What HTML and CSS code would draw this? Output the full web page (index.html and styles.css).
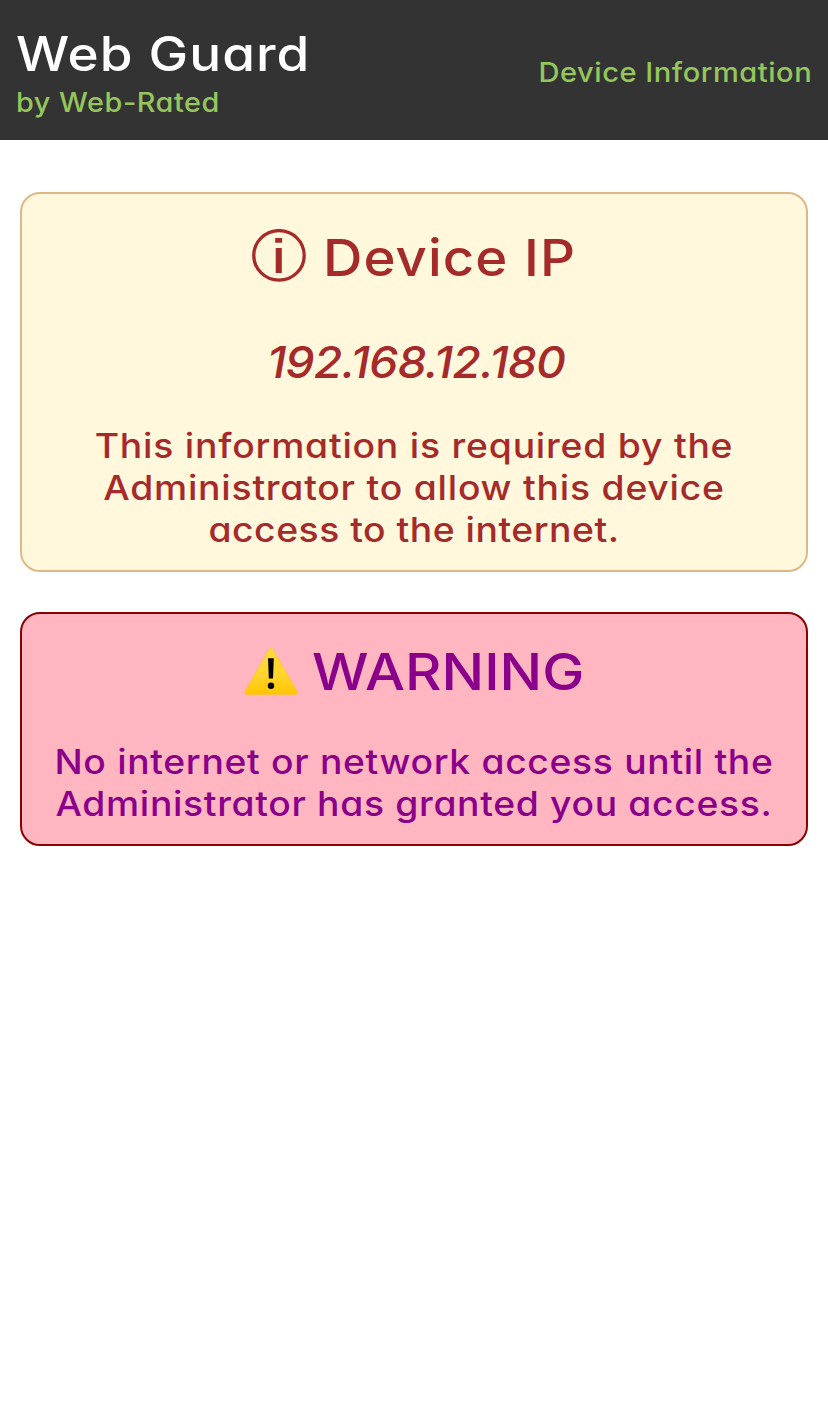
FILE: index.html
```html
<!DOCTYPE html>
<html lang="en">
<head>
<meta charset="utf-8">
<title>Web Guard</title>
<link rel="stylesheet" href="styles.css">
</head>
<body>
<header class="header">
  <div class="brand">
    <h1 class="brand-name">Web Guard</h1>
    <div class="brand-by">by Web-Rated</div>
  </div>
  <nav class="nav">Device Information</nav>
</header>
<main class="content">
  <section class="card card-info">
    <h2 class="title">
      <svg class="info-icon" viewBox="0 0 54 54"><ellipse cx="27" cy="26.4" rx="25.2" ry="24.8" fill="none" stroke="currentColor" stroke-width="3.3"/><path d="M23.2 9h6.9v4.7h-6.9zM23.7 19h6.1v25h-6.1z" fill="currentColor"/></svg>
      <span class="title-info">Device IP</span>
    </h2>
    <div class="address">192.168.12.180</div>
    <p class="text">This information is required by the<br>Administrator to allow this device<br><span class="last-line">access to the internet.</span></p>
  </section>
  <section class="card card-warning">
    <h2 class="title">
      <svg class="warning-icon" viewBox="0 0 54 48"><defs><linearGradient id="amber" x1="0" y1="0" x2="0" y2="1"><stop offset="0" stop-color="#ffda3b"/><stop offset=".6" stop-color="#ffd42c"/><stop offset="1" stop-color="#ffc400"/></linearGradient></defs><path d="M24.8 2.6Q27 -.6 29.2 2.6L53 44.2Q54.2 47.5 51 47.5H3Q-.2 47.5 1 44.2Z" fill="url(#amber)" stroke="#f5c21c" stroke-width=".5"/><path d="M24 11.2h5.8l-.8 20.3h-4.2z" fill="#000"/><circle cx="27" cy="38.8" r="3.2" fill="#000"/></svg>
      <span class="title-warning">WARNING</span>
    </h2>
    <p class="text">No internet or network access until the<br><span class="wide-words">Administrator has granted you access.</span></p>
  </section>
</main>
</body>
</html>
```
FILE: styles.css
```css
* { box-sizing: border-box; }
body {
  margin: 0;
  background: #fff;
  font-family: Inter, "Liberation Sans", sans-serif;
  font-feature-settings: "cv11" 1;
}
h1, h2, p { margin: 0; font-weight: 400; }
.header {
  height: 140px;
  padding: 24px 16px 0;
  display: flex;
  justify-content: space-between;
  background: #333;
}
.brand-name { font-size: 48px; line-height: 60px; font-weight: 500; color: #fff; letter-spacing: 0.9px; white-space: nowrap; transform: scaleX(1.105); transform-origin: left; }
.brand-by, .nav { font-size: 27px; font-weight: 500; color: #95c65c; white-space: nowrap; }
.brand-by { line-height: 37px; letter-spacing: 0.5px; transform: scaleX(1.067); transform-origin: left; }
.nav { padding-top: 30px; line-height: 37px; letter-spacing: 0.5px; transform: scaleX(1.077); transform-origin: right; }
.content { padding: 52px 20px 0; display: flex; flex-direction: column; gap: 40px; }
.card { border: 2px solid; border-radius: 20px; text-align: center; }
.card-info { height: 380px; padding-top: 32px; color: #a52a2a; background: #fff8dc; border-color: #deb887; }
.card-warning { height: 234px; padding-top: 26px; color: #8b008b; background: #ffb6c1; border-color: #8b0000; }
.title { display: flex; justify-content: center; align-items: center; height: 64px; line-height: 64px; font-size: 51px; font-weight: 500; white-space: nowrap; }
.title-info { letter-spacing: 1px; margin-right: 17px; transform: scaleX(1.07); transform-origin: left; }
.title-warning { margin-right: 26px; transform: scaleX(1.105); transform-origin: left; }
.info-icon { width: 54px; height: 54px; margin: 0 17px 4px 0; }
.warning-icon { width: 54px; height: 48px; margin: 0 14px 3px 0; }
.address { margin: 47px 0 0 4px; line-height: 50px; font-size: 44px; font-style: italic; font-weight: 500; letter-spacing: -0.8px; transform: scaleX(1.055); }
.text { margin-top: 38px; line-height: 42px; font-size: 34px; font-weight: 500; white-space: nowrap; letter-spacing: 0.7px; transform: scaleX(1.098); }
.card-warning .text { margin-top: 37px; letter-spacing: 0.6px; transform: scaleX(1.097); }
.last-line { letter-spacing: 0.45px; }
```
